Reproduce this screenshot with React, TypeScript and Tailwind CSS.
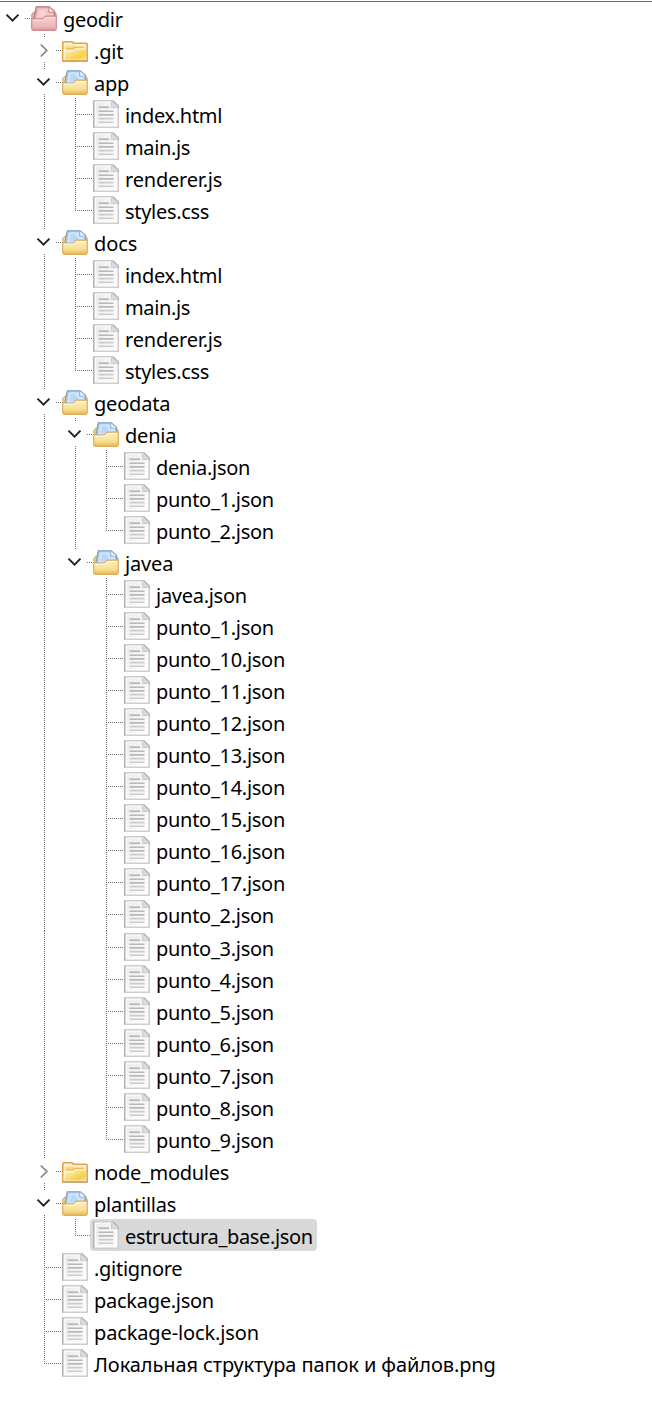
type Node = { name: string; kind: "root" | "closed" | "open" | "file"; track?: string; selected?: boolean; children?: Node[] };

const file = (name: string, track = "tracking-[-0.28px]", selected = false): Node => ({ name, kind: "file", track, selected });
const sources = () => [
  file("index.html", "tracking-[-0.3px]"),
  file("main.js", "tracking-[-0.35px]"),
  file("renderer.js", "tracking-[-0.2px]"),
  file("styles.css", "tracking-[-0.3px]"),
];

const tree: Node = {
  name: "geodir",
  kind: "root",
  track: "tracking-[-0.3px]",
  children: [
    { name: ".git", kind: "closed", track: "tracking-[-0.2px]" },
    { name: "app", kind: "open", track: "tracking-[-0.2px]", children: sources() },
    { name: "docs", kind: "open", track: "tracking-[-0.1px]", children: sources() },
    {
      name: "geodata",
      kind: "open",
      track: "tracking-[-0.2px]",
      children: [
        {
          name: "denia",
          kind: "open",
          track: "tracking-[-0.2px]",
          children: [file("denia.json"), file("punto_1.json"), file("punto_2.json")],
        },
        {
          name: "javea",
          kind: "open",
          track: "tracking-[-0.15px]",
          children: [
            file("javea.json"),
            ...[1, 10, 11, 12, 13, 14, 15, 16, 17, 2, 3, 4, 5, 6, 7, 8, 9].map((n) => file(`punto_${n}.json`)),
          ],
        },
      ],
    },
    { name: "node_modules", kind: "closed", track: "tracking-[-0.28px]" },
    {
      name: "plantillas",
      kind: "open",
      track: "tracking-[-0.25px]",
      children: [file("estructura_base.json", "tracking-[-0.35px]", true)],
    },
    file(".gitignore"),
    file("package.json", "tracking-[-0.27px]"),
    file("package-lock.json", "tracking-[-0.13px]"),
    file("Локальная структура папок и файлов.png", "tracking-[-0.1px]"),
  ],
};

type Row = { node: Node; guides: boolean[]; last: boolean; root: boolean };

function flatten(node: Node, guides: boolean[], last: boolean, root: boolean): Row[] {
  const next = root ? [] : [...guides, !last];
  const kids = node.children ?? [];
  return [{ node, guides, last, root }, ...kids.flatMap((k, i) => flatten(k, next, i === kids.length - 1, false))];
}

function Guide({ on }: { on: boolean }) {
  return (
    <svg className="h-full w-[31px] shrink-0" shapeRendering="crispEdges">
      {on && <line x1="13.5" y1="0" x2="13.5" y2="33" stroke="#6e6e6e" strokeDasharray="1 1" />}
    </svg>
  );
}

function Joint({ row }: { row: Row }) {
  const { node, last, root } = row;
  const dot = { stroke: "#6e6e6e", strokeDasharray: "1 1", shapeRendering: "crispEdges" as const };
  if (node.kind === "file") {
    return (
      <svg className="h-full w-[31px] shrink-0">
        <line x1="13.5" y1="0" x2="13.5" y2={last ? 17 : 33} {...dot} />
        <line x1="13" y1="16.5" x2="31" y2="16.5" {...dot} />
      </svg>
    );
  }
  return (
    <svg className="h-full w-[31px] shrink-0">
      {!root && <line x1="13.5" y1="0" x2="13.5" y2="3" {...dot} />}
      {!root && !last && <line x1="13.5" y1="28" x2="13.5" y2="33" {...dot} />}
      <line x1="25" y1="16.5" x2="31" y2="16.5" {...dot} />
      {node.kind === "closed" ? (
        <path d="M9.8 10.5 L15.8 16.5 L9.8 22.5" fill="none" stroke="#858585" strokeWidth="1.7" />
      ) : (
        <path d="M6.5 12.7 L12.5 18.7 L18.5 12.7" fill="none" stroke="#222" strokeWidth="1.9" />
      )}
    </svg>
  );
}

function FileIcon() {
  return (
    <svg className="h-7 w-[26px] shrink-0" viewBox="0 0 26 28">
      <path d="M0 0H20L26 6V28H0Z" fill="#cecece" />
      <path d="M0 .5H1.2V27.5H0Z" fill="#b2b2b2" />
      <path d="M1.8 1.6H18.8L24.4 7.2V26.4H1.8Z" fill="#fdfdfd" />
      <path d="M3 2.8H18L23 8V25H3Z" fill="url(#paper)" />
      <path d="M18.2 1V7.8H25L24.5 5.4L20.2 .8Z" fill="#dcdcdc" />
      <path d="M19.6 .5L25.5 6.4V8" fill="none" stroke="#b0b0b0" strokeWidth="1.2" />
      <path d="M18.4 1.5V7.6H25" fill="none" stroke="#c4c4c4" strokeWidth=".8" />
      <path d="M5.5 7.2H16" stroke="#b6b6b6" strokeWidth="1.7" />
      <path d="M5.5 11.2H20.5M5.5 14.9H20.5" stroke="#b8b8b8" strokeWidth="1.6" />
      <path d="M5.5 18.6H20.5M5.5 22.3H20.5" stroke="#cbcbcb" strokeWidth="1.6" />
    </svg>
  );
}

function ClosedIcon() {
  return (
    <svg className="h-[21px] w-[26px] shrink-0" viewBox="0 0 26 21">
      <path d="M.8 19.5V1.6Q.8 .8 1.8 .8H10L11.6 2.2H24.2Q25.2 2.2 25.2 3.2V19.8H.8Z" fill="#fff0c4" stroke="#dfa64d" strokeWidth="1.6" />
      <path d="M3.2 4.6H10.5L12 5.4H22.8V9H3.2Z" fill="#f9d890" />
      <path d="M2.2 9.6H11.5L13.5 7.6H23.8V18.6H2.2Z" fill="url(#gold)" />
      <path d="M4.5 7.6H10.5L12 6.4H21.5" fill="none" stroke="#eebb5d" strokeWidth="1.2" />
      <path d="M2.2 18.4V9.9H11.8L13.8 8H23.8" fill="none" stroke="#fff8dc" strokeWidth="1" />
      <path d="M.5 20.4H25.5" stroke="#c3a77a" strokeWidth="1" />
    </svg>
  );
}

function OpenIcon({ red }: { red: boolean }) {
  const edge = red ? "#cf8b8f" : "#dcae5d";
  return (
    <svg className="h-[25px] w-[26px] shrink-0" viewBox="0 0 26 25">
      <path d="M.8 13V8L3 6H23.5L25.2 8V13Z" fill={red ? "#e6b0b3" : "#f3cd7f"} stroke={edge} />
      <path d="M2.8 14L5.2 .7H18.3L23.6 5.5V13.5H2.8Z" fill={red ? "#e3a6aa" : "#a5c9ef"} stroke={red ? "#b66f75" : "#7d9dbd"} strokeWidth="1.1" />
      <path d="M5 12.5L6.8 2.2H17V6.5H22V11H14L12.3 12.5Z" fill={red ? "#efc5c7" : "#cfe5fa"} />
      <path d="M7.5 11L9 4H13.5L17 11Z" fill={red ? "#f3d3d4" : "#b9d8f6"} />
      <path d="M17.8 1V6.2H23.4" fill={red ? "#f9e4e4" : "#f2f9ff"} stroke={red ? "#c98286" : "#8fb1d4"} strokeWidth=".9" />
      <path d="M.7 13H11.5L14.2 10.2H25.3V22.5Q25.3 24.3 23.8 24.3H2.2Q.7 24.3 .7 22.5Z" fill={red ? "url(#rose)" : "url(#sand)"} stroke={edge} strokeWidth="1.2" />
      <path d="M1.8 14.3H12L14.7 11.5H24.2" fill="none" stroke={red ? "#fae2e2" : "#fff8dc"} strokeWidth="1.1" />
    </svg>
  );
}

function Gradients() {
  return (
    <svg className="absolute h-0 w-0">
      <defs>
        <linearGradient id="paper" x1="0" y1="0" x2="1" y2="1">
          <stop offset="0" stopColor="#ececec" />
          <stop offset="1" stopColor="#fdfdfd" />
        </linearGradient>
        <linearGradient id="gold" x1="0" y1="0" x2="1" y2="1">
          <stop offset="0" stopColor="#fff3bd" />
          <stop offset=".75" stopColor="#f6d04a" />
          <stop offset="1" stopColor="#fae58c" />
        </linearGradient>
        <linearGradient id="sand" x1="0" y1="0" x2="0" y2="1">
          <stop offset="0" stopColor="#fff1c0" />
          <stop offset=".65" stopColor="#f8de90" />
          <stop offset="1" stopColor="#e8b656" />
        </linearGradient>
        <linearGradient id="rose" x1="0" y1="0" x2="0" y2="1">
          <stop offset="0" stopColor="#f4cfd0" />
          <stop offset=".7" stopColor="#edb9bb" />
          <stop offset="1" stopColor="#d9979a" />
        </linearGradient>
      </defs>
    </svg>
  );
}

function TreeRow({ row, tall }: { row: Row; tall: boolean }) {
  const { node, guides, root } = row;
  return (
    <div className={`flex items-start ${tall ? "h-[33px]" : "h-8"}`}>
      {!root && <div className="w-[31px] shrink-0" />}
      {guides.map((g, i) => (
        <Guide key={i} on={g} />
      ))}
      <Joint row={row} />
      <div className={`-ml-[3px] flex h-8 pl-[3px] pr-1 ${node.selected ? "rounded-sm bg-[#d9d9d9]" : ""}`}>
        <span className={node.kind === "file" ? "pt-0.5" : node.kind === "closed" ? "pt-[7px]" : "pt-1"}>
          {node.kind === "file" ? <FileIcon /> : node.kind === "closed" ? <ClosedIcon /> : <OpenIcon red={node.kind === "root"} />}
        </span>
        <span className={`ml-1.5 whitespace-pre pt-0.5 leading-8 ${node.track ?? ""}`}>{node.name}</span>
      </div>
    </div>
  );
}

export default function App() {
  const rows = flatten(tree, [], true, true);
  return (
    <main className="h-[1401px] w-[652px] overflow-hidden bg-white pt-px font-['Noto_Sans','Open_Sans',sans-serif] text-[20px] text-black">
      <Gradients />
      <div className="h-px bg-[#666]" />
      {rows.map((row, i) => (
        <TreeRow key={i} row={row} tall={i === 28} />
      ))}
    </main>
  );
}
